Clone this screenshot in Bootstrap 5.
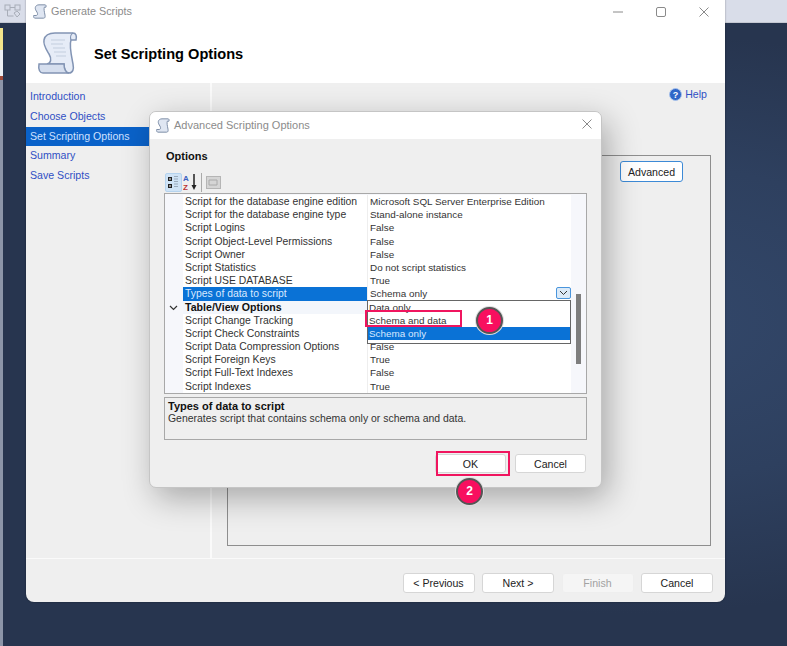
<!DOCTYPE html>
<html lang="en">
<head>
<meta charset="utf-8">
<title>Advanced Scripting Options</title>
<link href="https://cdn.jsdelivr.net/npm/bootstrap@5.3.0/dist/css/bootstrap.min.css" rel="stylesheet">
<style>
html,body{margin:0;height:646px;overflow:hidden}
body{position:relative;width:787px;background:radial-gradient(ellipse 70% 45% at 80% 50%,#33486b 0,#2e405f 55%,#27354f 100%);font-family:"Liberation Sans",Arial,sans-serif;font-size:10.5px;color:#222}
.topstrip{height:23px;background:#d9dde9;border-bottom:1px solid #c4c8d2;display:flex;padding:4px 0 0 4px}
.edgecol{position:absolute;left:0;top:23px;width:3px;height:623px;background:#8c95a8;display:flex;flex-direction:column}
.edgecol i{display:block}
.e1{height:5px;background:#27354f}
.e2{height:22px;background:#f4e58b}
.e3{height:26px;background:#eef0f4}
.e4{height:4px;background:#a14b3a}
.win-main{position:absolute;left:26px;top:-8px;width:699px;height:610px;background:#efefef;border-radius:8px;box-shadow:0 0 2px rgba(0,0,0,.4);display:flex;flex-direction:column;overflow:hidden}
.win-title{height:91px;background:#fff;flex:none;position:relative}
.tbar{display:flex;align-items:center;gap:4px;color:#8b8b8b}
.main-tbar{position:absolute;left:7px;top:11px;font-size:10.8px}
.ctrls{position:absolute;right:0;top:11px;display:flex;gap:0}
.ctrls span{width:43px;height:18px;display:flex;justify-content:center;align-items:center}
.hdr-icon{position:absolute;left:11px;top:39px}
.hdr-text{position:absolute;left:68px;top:53px;font-size:14.6px;font-weight:700;color:#000;margin:0;line-height:18px}
.win-body{flex:1;display:flex;min-height:0}
.navcol{width:186px;border-right:2px solid #fafafa;flex:none;padding-top:4px}
.navcol a{display:block;height:19.8px;line-height:19px;padding-left:4px;color:#2f4fc4;text-decoration:none;font-size:10.6px}
.navcol a.on{background:#0a62c9;color:#cfe0ff}
.rightcol{flex:1;position:relative}
.helplink{position:absolute;right:18px;top:4px;display:flex;align-items:center;gap:3px;color:#2f4fc4;font-size:10.6px}
.group-frame{position:absolute;left:15px;top:72px;width:484px;height:391px;border:1px solid #8e8e8e}
.adv-btn{position:absolute;right:27px;top:5px;width:63px;height:21px;background:#fff;border:1px solid #3d8ad6;border-radius:3px;font-size:10.6px;color:#222;line-height:18px;padding:0;text-align:center}
.foot-line{border-top:1px solid #fafafa;height:44px;flex:none;display:flex;justify-content:flex-end;gap:7.5px;padding:14px 12px 0 0}
.wbtn{width:72px;height:20px;background:#fff;border:1px solid #d6d6d6;border-radius:3px;font-size:10.6px;line-height:17px;color:#222;padding:0;text-align:center}
.wbtn.off{background:#f5f5f5;border-color:#eee;color:#a2a2a2}
.dlg{position:absolute;left:149px;top:111px;width:453px;height:377px;background:#efefef;border:1px solid #c5c5c5;border-radius:7px;box-shadow:6px 10px 32px rgba(0,0,0,.3);display:flex;flex-direction:column;overflow:hidden}
.dlg-title{height:27px;background:#fff;flex:none;position:relative}
.dlg-title .tbar{position:absolute;left:6px;top:5px;font-size:11px}
.dlg-x{position:absolute;right:9px;top:7px}
.dlg-body{padding:0 14px;flex:1;position:relative}
.opt-h{font-weight:700;color:#111;margin:10px 0 0 2px;font-size:11px;line-height:14px}
.tools{display:flex;align-items:center;height:20px;margin:9px 0 1px 1px;gap:1px}
.tool-on{width:17px;height:19px;background:#cfe3f6;border:1px solid #b5d3ee;border-radius:2px;display:flex;justify-content:center;align-items:center}
.tool-sep{width:1px;height:19px;background:#aaa;margin:0 3px 0 2px}
.pgrid{border:1px solid #a8a8a8;height:201px;width:423px;background:#f6f7fb;overflow:hidden;position:relative;padding-top:1px}
.pr{display:flex;height:13.2px;line-height:13.2px;margin-left:18px;background:#fff;width:388px;white-space:nowrap}
.pr .k{width:185px;padding-left:2px;border-right:1px solid #eee;flex:none;color:#333;font-size:10.4px}
.pr .v{padding-left:2px;color:#333;flex:1;font-size:9.9px}
.pr.sel .k{background:#0a72d6;color:#d9e9ff}
.pr.cat{background:#f3f6fb;position:relative}
.pr.cat .k{font-weight:700;color:#111;border:0;font-size:10.6px}
.chev{position:absolute;left:-14px;top:4px}
.combo-btn{position:absolute;left:391px;top:93px;width:15px;height:12px;background:#dbeaf8;border:1px solid #4a95dc;border-radius:2px;display:flex;align-items:center;justify-content:center}
.gscroll{position:absolute;left:411px;top:100px;width:5px;height:70px;background:#7e7e7e}
.ddlist{position:absolute;left:202px;top:106px;width:204px;height:44px;background:#fff;border:1px solid #666;z-index:3;line-height:13px;color:#333;font-size:9.9px}
.ddlist div{height:13px;padding-left:1px}
.ddlist .picked{background:#0a72d6;color:#d9e9ff}
.desc{border:1px solid #a8a8a8;width:423px;height:43px;margin-top:3px;padding:2px 3px;line-height:12.5px;color:#333;font-size:10.45px}
.desc b{color:#111;display:block;font-size:11px}
.dlg-foot{display:flex;justify-content:flex-end;gap:9px;margin-top:14px;align-items:center;padding-right:1px}
.dbtn{height:19px;width:71px;background:#fff;border:1px solid #d6d6d6;border-radius:3px;font-size:10.6px;line-height:16px;color:#222;padding:0;text-align:center}
.mark-box{position:absolute;border:2px solid #f0155f;pointer-events:none;z-index:5}
.mb1{left:365px;top:310px;width:97px;height:17px}
.mb2{left:436px;top:451px;width:74px;height:25px}
.step{position:absolute;width:27px;height:27px;border-radius:50%;background:#f80f5f;border:2px solid #555;color:#fff;box-shadow:0 0 0 1px #ddd;font-weight:700;font-size:12px;line-height:23px;text-align:center;z-index:6}
.s1{left:476px;top:307px}
.s2{left:456px;top:478px}
</style>
</head>
<body>
<div class="topstrip">
  <svg width="18" height="15" viewBox="0 0 18 15"><rect x="1" y="1" width="5" height="5" fill="none" stroke="#a8adb8"/><rect x="11" y="1" width="5" height="5" fill="none" stroke="#a8adb8"/><path d="M6 3.500h5M3.500 6v6h6" fill="none" stroke="#a8adb8"/><path d="M10 9l3-2 3 3-3 3z" fill="none" stroke="#a8adb8"/></svg>
</div>
<div class="edgecol"><i class="e1"></i><i class="e2"></i><i class="e3"></i><i class="e4"></i></div>

<div class="win-main">
  <div class="win-title">
    <div class="tbar main-tbar">
      <svg width="14" height="15" viewBox="36 31 42 44"><path d="M54 33h18c3 0 4 3 3 7l-5 0c-2 5 0 14 2 24 1 5 0 9-4 9H42c-3 0-5-3-4-8h8c4-1 5-5 2-10-3-5-6-9-5-14 1-5 5-8 11-8z" fill="#dfe6f2" stroke="#7f8fa8" stroke-width="3"/></svg>
      <span>Generate Scripts</span>
    </div>
    <div class="ctrls">
      <span><svg width="10" height="2"><path d="M0 1h10" stroke="#8a8a8a"/></svg></span>
      <span><svg width="10" height="10"><rect x=".5" y=".5" width="9" height="9" rx="1.5" fill="none" stroke="#8a8a8a"/></svg></span>
      <span><svg width="10" height="10"><path d="M.5.5l9 9M9.500.5l-9 9" stroke="#8a8a8a"/></svg></span>
    </div>
    <svg class="hdr-icon" width="42" height="44" viewBox="36 31 42 44">
      <path d="M54 33h18c3 0 4 3 3 7l-5 0c-2 5 0 14 2 24 1 5 0 9-4 9-3 0-5-2-5-9H46c4-1 5-5 2-10-3-5-6-9-5-14 1-5 5-7 11-7z" fill="#e6ecf7" stroke="#8294b4" stroke-width="1.5"/>
      <path d="M38 64h25c0 5 2 9 5 9H42c-3 0-5-3-4-9z" fill="#d5deee" stroke="#8294b4" stroke-width="1.5"/>
      <path d="M70 40c-1-3 0-6 2-7" fill="none" stroke="#8294b4" stroke-width="1.2"/>
      <path d="M50 40h14M50 44h12M52 48h12M53 52h12M55 56h10" stroke="#c3cede"/>
    </svg>
    <h1 class="hdr-text">Set Scripting Options</h1>
  </div>
  <div class="win-body">
    <nav class="navcol">
      <a href="#">Introduction</a>
      <a href="#">Choose Objects</a>
      <a href="#" class="on">Set Scripting Options</a>
      <a href="#">Summary</a>
      <a href="#">Save Scripts</a>
    </nav>
    <div class="rightcol">
      <div class="helplink">
        <svg width="13" height="13" viewBox="0 0 13 13"><circle cx="6.500" cy="6.500" r="6" fill="#2f66c8" stroke="#a8c2ea"/><text x="6.500" y="10" text-anchor="middle" font-size="9" font-weight="700" fill="#fff" font-family="Liberation Sans">?</text></svg>
        <span>Help</span>
      </div>
      <div class="group-frame"><button class="adv-btn" type="button">Advanced</button></div>
    </div>
  </div>
  <div class="foot-line">
    <button class="wbtn" type="button">&lt; Previous</button>
    <button class="wbtn" type="button">Next &gt;</button>
    <button class="wbtn off" type="button">Finish</button>
    <button class="wbtn" type="button">Cancel</button>
  </div>
</div>

<div class="dlg">
  <div class="dlg-title">
    <div class="tbar">
      <svg width="14" height="15" viewBox="36 31 42 44"><path d="M54 33h18c3 0 4 3 3 7l-5 0c-2 5 0 14 2 24 1 5 0 9-4 9H42c-3 0-5-3-4-8h8c4-1 5-5 2-10-3-5-6-9-5-14 1-5 5-8 11-8z" fill="#dfe6f2" stroke="#7f8fa8" stroke-width="3"/></svg>
      <span>Advanced Scripting Options</span>
    </div>
    <svg class="dlg-x" width="10" height="10"><path d="M.5.5l9 9M9.500.5l-9 9" stroke="#8a8a8a"/></svg>
  </div>
  <div class="dlg-body">
    <div class="opt-h">Options</div>
    <div class="tools">
      <span class="tool-on"><svg width="13" height="15" viewBox="0 0 13 15"><rect x="1" y="2" width="4" height="4" fill="#222"/><rect x="1" y="9" width="4" height="4" fill="#222"/><path d="M2 4h2M2 11h2" stroke="#fff"/><path d="M7 1.500h4M7 4h4M7 6.500h4M7 9h4M7 11.500h4" stroke="#9ab"/></svg></span>
      <svg width="15" height="18" viewBox="0 0 15 18"><text x="0" y="8" font-size="8" font-weight="700" fill="#3a5fc0" font-family="Liberation Sans">A</text><text x="0" y="17" font-size="8" font-weight="700" fill="#b33" font-family="Liberation Sans">Z</text><path d="M11 1v12" stroke="#222" stroke-width="1.500"/><path d="M8.500 12h5L11 17z" fill="#222"/></svg>
      <span class="tool-sep"></span>
      <svg width="15" height="15" viewBox="0 0 15 15"><rect x=".5" y="1.500" width="14" height="12" fill="#d5d5d5" stroke="#b5b5b5"/><path d="M3 5h8v5H3z" fill="none" stroke="#aaa"/></svg>
    </div>
    <div class="pgrid">
      <div class="pr"><div class="k">Script for the database engine edition</div><div class="v">Microsoft SQL Server Enterprise Edition</div></div>
      <div class="pr"><div class="k">Script for the database engine type</div><div class="v">Stand-alone instance</div></div>
      <div class="pr"><div class="k">Script Logins</div><div class="v">False</div></div>
      <div class="pr"><div class="k">Script Object-Level Permissions</div><div class="v">False</div></div>
      <div class="pr"><div class="k">Script Owner</div><div class="v">False</div></div>
      <div class="pr"><div class="k">Script Statistics</div><div class="v">Do not script statistics</div></div>
      <div class="pr"><div class="k">Script USE DATABASE</div><div class="v">True</div></div>
      <div class="pr sel"><div class="k">Types of data to script</div><div class="v">Schema only</div></div>
      <div class="pr cat"><svg class="chev" width="9" height="6"><path d="M1 1l3.500 3.500L8 1" fill="none" stroke="#333" stroke-width="1.200"/></svg><div class="k">Table/View Options</div></div>
      <div class="pr"><div class="k">Script Change Tracking</div><div class="v"></div></div>
      <div class="pr"><div class="k">Script Check Constraints</div><div class="v"></div></div>
      <div class="pr"><div class="k">Script Data Compression Options</div><div class="v">False</div></div>
      <div class="pr"><div class="k">Script Foreign Keys</div><div class="v">True</div></div>
      <div class="pr"><div class="k">Script Full-Text Indexes</div><div class="v">False</div></div>
      <div class="pr"><div class="k">Script Indexes</div><div class="v">True</div></div>
      <span class="combo-btn"><svg width="9" height="6"><path d="M1 1l3.500 3.500L8 1" fill="none" stroke="#333"/></svg></span>
      <div class="ddlist"><div>Data only</div><div>Schema and data</div><div class="picked">Schema only</div></div>
      <div class="gscroll"></div>
    </div>
    <div class="desc"><b>Types of data to script</b>Generates script that contains schema only or schema and data.</div>
    <div class="dlg-foot">
      <button class="dbtn" type="button">OK</button>
      <button class="dbtn" type="button">Cancel</button>
    </div>
  </div>
</div>

<div class="mark-box mb1"></div>
<div class="mark-box mb2"></div>
<div class="step s1">1</div>
<div class="step s2">2</div>
</body>
</html>
